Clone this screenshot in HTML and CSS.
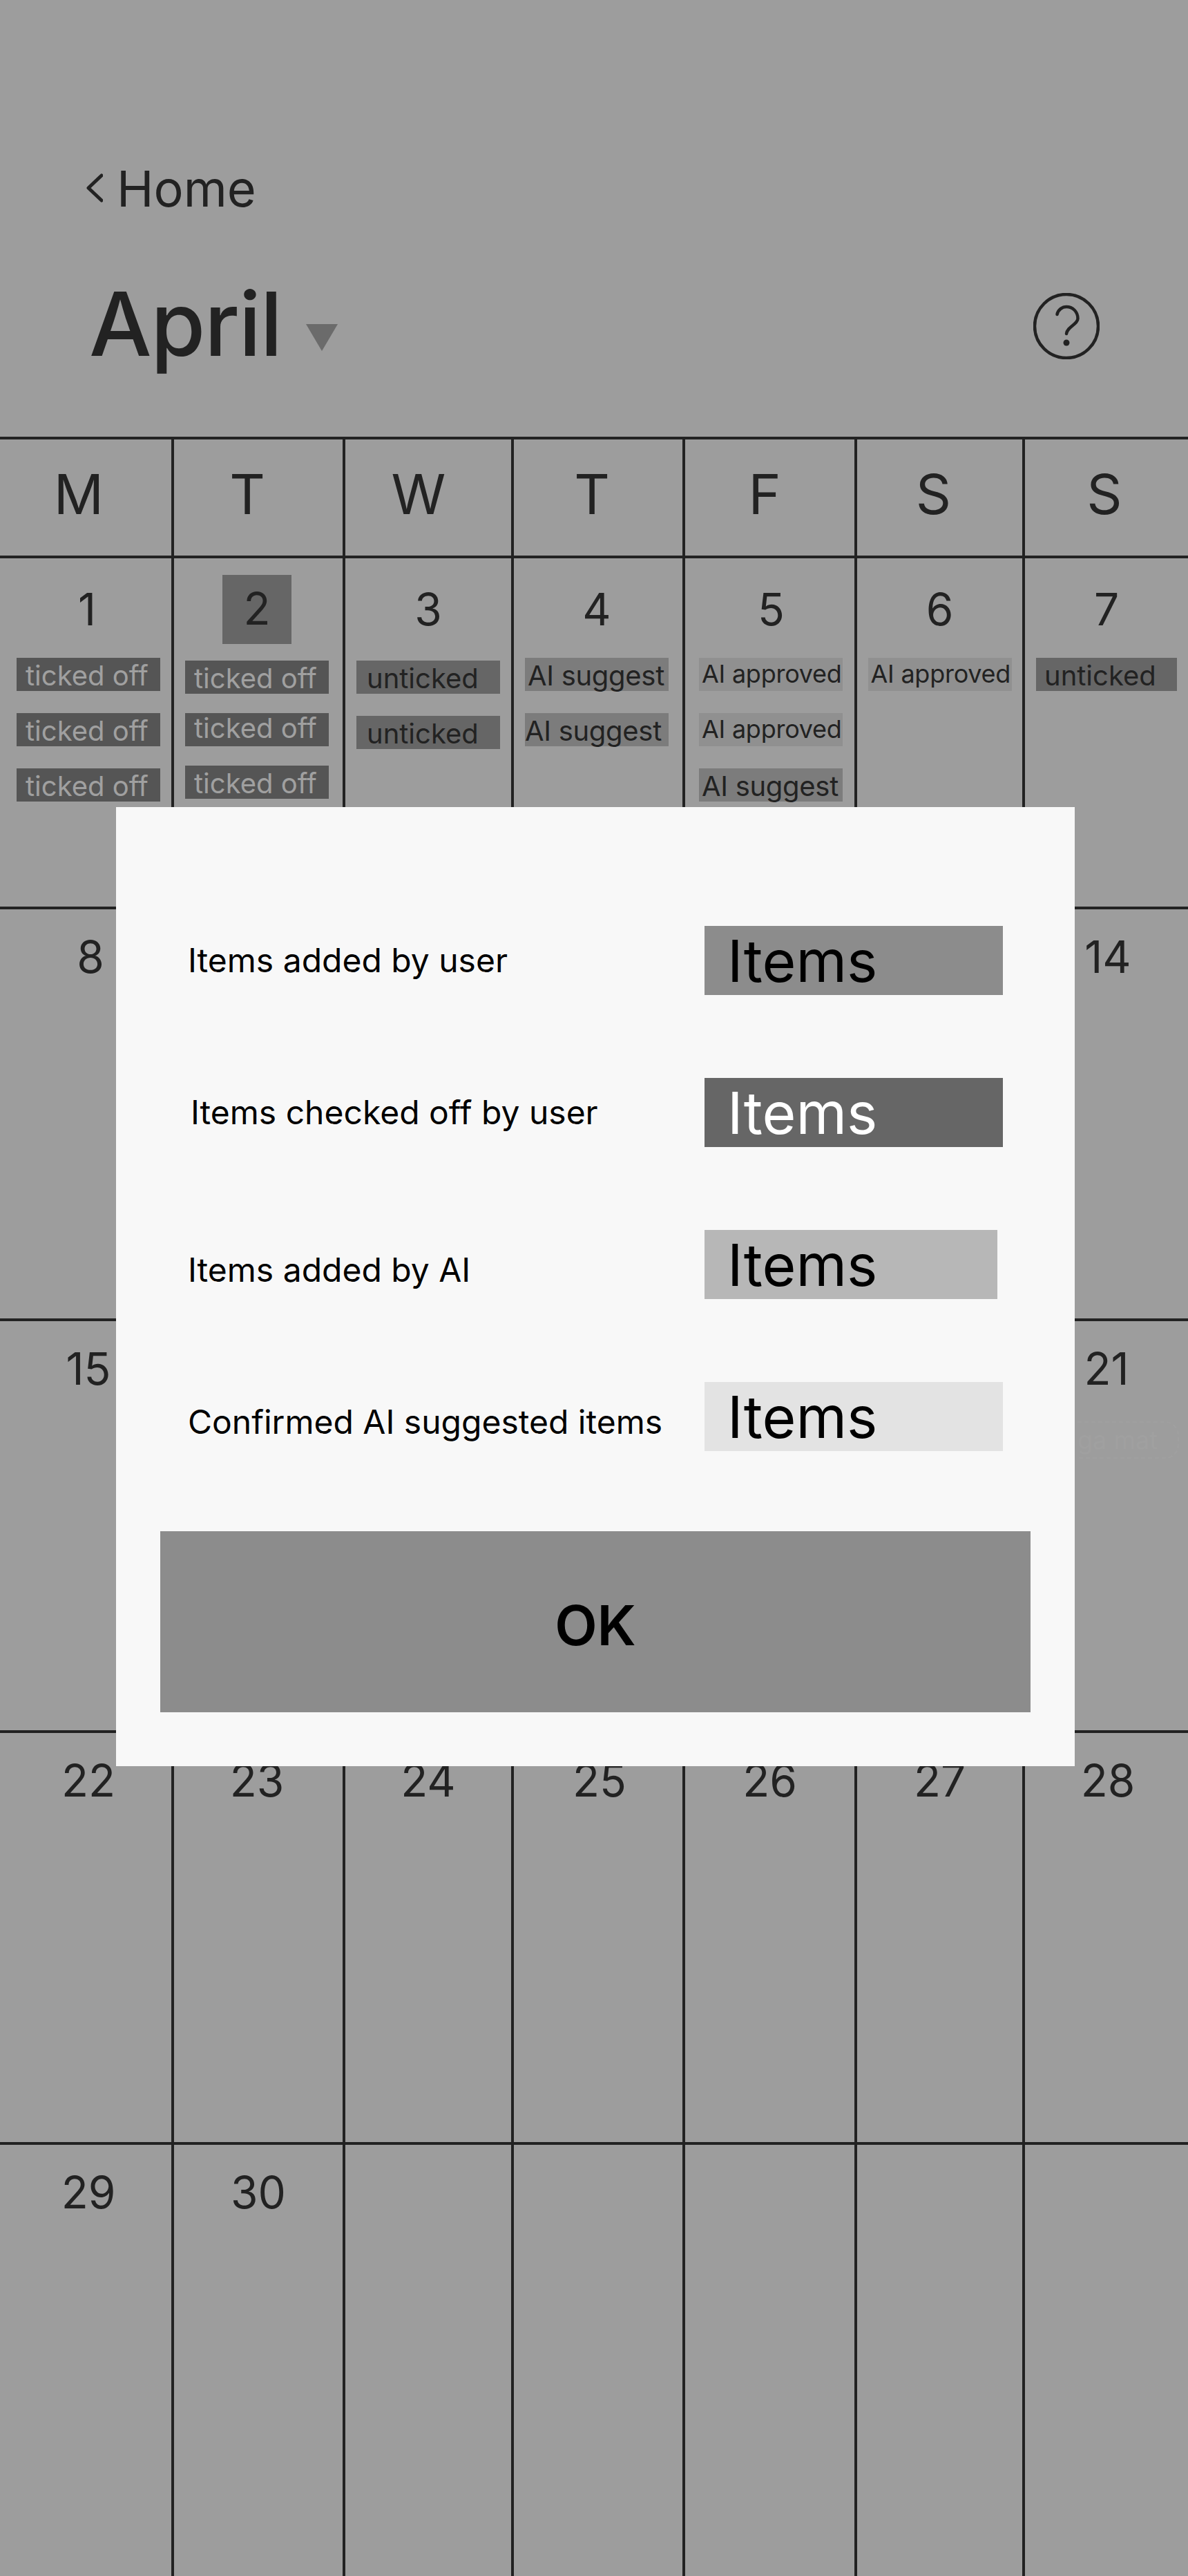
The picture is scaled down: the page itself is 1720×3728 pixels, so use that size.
FILE: index.html
```html
<!DOCTYPE html>
<html lang="en">
<head>
<meta charset="utf-8">
<title>April</title>
<link rel="stylesheet" href="styles.css">
</head>
<body>
<div class="page">
  <header class="header">
    <a class="back">
      <svg class="chevron" viewBox="0 0 24 42"><path d="M22 3 L3 21 L22 39"/></svg>
      <span>Home</span>
    </a>
    <div class="title-row">
      <h1 class="month">April</h1>
      <svg class="caret" viewBox="0 0 46 39"><path d="M0 0H46L23 39Z"/></svg>
      <svg class="help" viewBox="0 0 96 96">
        <ellipse cx="48" cy="48" rx="46" ry="46"/>
        <path d="M34.5 31C36 24 42 20 48 20C57 20 64.5 27 64.5 37C64.5 45 49 49 48 59"/>
        <circle class="help-dot" cx="48" cy="72" r="4.5"/>
      </svg>
    </div>
  </header>

  <section class="calendar">
    <div class="weekday">M</div><div class="weekday">T</div><div class="weekday">W</div><div class="weekday">T</div><div class="weekday">F</div><div class="weekday">S</div><div class="weekday">S</div>

    <div class="cell first-week"><div class="date date-right">1</div>
      <div class="tags tags-first"><div class="tag done">ticked off</div><div class="tag done">ticked off</div><div class="tag done">ticked off</div></div></div>
    <div class="cell first-week"><div class="date today"><span>2</span></div>
      <div class="tags tags-low tags-tight"><div class="tag done">ticked off</div><div class="tag done raised">ticked off</div><div class="tag done">ticked off</div></div></div>
    <div class="cell first-week"><div class="date">3</div>
      <div class="tags tags-low"><div class="tag todo">unticked</div><div class="tag todo">unticked</div></div></div>
    <div class="cell first-week"><div class="date date-left">4</div>
      <div class="tags tags-left"><div class="tag suggest">AI suggest</div><div class="tag suggest flush">AI suggest</div></div></div>
    <div class="cell first-week"><div class="date date-right">5</div>
      <div class="tags tags-right"><div class="tag approved">AI approved</div><div class="tag approved">AI approved</div><div class="tag suggest">AI suggest</div></div></div>
    <div class="cell first-week"><div class="date">6</div>
      <div class="tags"><div class="tag approved">AI approved</div></div></div>
    <div class="cell first-week"><div class="date">7</div>
      <div class="tags"><div class="tag todo last">unticked</div></div></div>

    <div class="cell"><div class="date date-eight">8</div></div><div class="cell"></div><div class="cell"></div><div class="cell"></div><div class="cell"></div><div class="cell"></div><div class="cell"><div class="date">14</div></div>
    <div class="cell"><div class="date">15</div></div><div class="cell"></div><div class="cell"></div><div class="cell"></div><div class="cell"></div><div class="cell"></div><div class="cell"><div class="date date-left">21</div><div class="ghost">ga mat</div></div>
    <div class="cell"><div class="date">22</div></div><div class="cell"><div class="date date-left">23</div></div><div class="cell"><div class="date">24</div></div><div class="cell"><div class="date date-right">25</div></div><div class="cell"><div class="date">26</div></div><div class="cell"><div class="date">27</div></div><div class="cell"><div class="date">28</div></div>
    <div class="cell"><div class="date">29</div></div><div class="cell"><div class="date">30</div></div><div class="cell"></div><div class="cell"></div><div class="cell"></div><div class="cell"></div><div class="cell"></div>
  </section>

  <div class="modal">
    <div class="legend-row">
      <div class="legend-label">Items added by user</div>
      <div class="swatch swatch-user">Items</div>
    </div>
    <div class="legend-row">
      <div class="legend-label label-inset">Items checked off by user</div>
      <div class="swatch swatch-checked">Items</div>
    </div>
    <div class="legend-row">
      <div class="legend-label label-low">Items added by AI</div>
      <div class="swatch swatch-ai swatch-narrow">Items</div>
    </div>
    <div class="legend-row">
      <div class="legend-label label-low">Confirmed AI suggested items</div>
      <div class="swatch swatch-confirmed">Items</div>
    </div>
    <button class="ok">OK</button>
  </div>
</div>
</body>
</html>
```

FILE: styles.css
```css
* { box-sizing: border-box; }
html, body { margin: 0; padding: 0; }
body {
  width: 1720px;
  height: 3728px;
  overflow: hidden;
  background: #9d9d9d;
  color: #222;
  font-family: "Inter", "Liberation Sans", sans-serif;
}
.page { position: relative; width: 1720px; height: 3728px; }

/* header */
.header { height: 632px; padding-top: 229px; }
.back {
  display: flex;
  align-items: center;
  height: 88px;
  padding-left: 125px;
  gap: 20px;
  font-size: 72px;
  line-height: 88px;
}
.chevron { width: 24px; height: 42px; margin-top: -2px; }
.chevron path { fill: none; stroke: #222; stroke-width: 5; stroke-linecap: round; stroke-linejoin: round; }
.title-row {
  display: flex;
  align-items: flex-start;
  margin-top: 74px;
  padding: 0 128px 0 129px;
}
.month { margin: 0; font-size: 128px; line-height: 156px; font-weight: 500; letter-spacing: -1.4px; }
.caret { width: 46px; height: 39px; margin: 78px 0 0 35px; fill: #6b6b6b; }
.help { width: 96px; height: 96px; margin: 33px 0 0 auto; }
.help ellipse, .help path { fill: none; stroke: #222; stroke-width: 4.5; stroke-linecap: round; }
.help-dot { fill: #222; }

/* calendar */
.calendar {
  display: grid;
  grid-template-columns: 252px 248px 244px 248px 249px 243px 236px;
  grid-template-rows: 172px 508px 596px 596px 596px 624px;
  border-top: 4px solid #222;
}
.weekday {
  display: flex;
  align-items: center;
  justify-content: center;
  padding-bottom: 10px;
  font-size: 80px;
  line-height: 1;
  border-right: 4px solid #222;
  border-bottom: 4px solid #222;
}
.weekday:nth-child(1) { padding-right: 20px; }
.weekday:nth-child(2) { padding-right: 32px; }
.weekday:nth-child(3) { padding-right: 28px; }
.weekday:nth-child(4) { padding-right: 18px; }
.weekday:nth-child(5) { padding-right: 15px; }
.weekday:nth-child(6) { padding-right: 18px; }
.weekday:nth-child(7) { padding-right: 6px; border-right: 0; }

.cell {
  border-right: 4px solid #222;
  border-bottom: 4px solid #222;
  padding-top: 37px;
  min-width: 0;
}
.cell:nth-child(7n) { border-right: 0; padding-left: 4px; }
.cell:nth-child(7n+1) { padding-left: 8px; }
.cell:nth-last-child(-n+7) { border-bottom: 0; }

.date { font-size: 64px; line-height: 64px; text-align: center; }
.date-left { padding-right: 4px; }
.date-right { padding-left: 4px; }
.date-eight { padding-left: 6px; }
.first-week { padding: 24px 0 0; }
.cell.first-week { padding-left: 0; }
.first-week .date {
  display: flex;
  align-items: center;
  justify-content: center;
  height: 100px;
  line-height: 98px;
}
.today span { display: block; width: 100px; height: 100px; background: #666; line-height: 98px; }
.first-week .today { margin-right: 4px; }

/* chips in the first week */
.tags { display: flex; flex-direction: column; gap: 32px; margin-top: 20px; align-items: center; }
.tags-first { padding-left: 8px; }
.tags-low { margin-top: 24px; }
.tags-tight { gap: 28px; margin-right: 4px; }
.tags-left { padding-right: 4px; }
.tags-right { padding-left: 3px; }
.tag {
  flex: none;
  width: 208px;
  height: 48px;
  font-size: 40px;
  line-height: 51px;
  white-space: nowrap;
  padding-left: 10px;
}
.done { background: #555; color: #a0a0a0; padding-left: 13px; }
.raised { line-height: 43px; }
.todo { background: #666; padding-left: 15px; }
.last { width: 204px; padding-left: 12px; }
.suggest { background: #7c7c7c; padding-left: 4px; letter-spacing: -0.3px; }
.flush { padding-left: 0; }
.approved { background: #909090; font-size: 36px; line-height: 46px; padding-left: 4px; letter-spacing: -0.25px; }

.ghost {
  width: 147px;
  height: 54px;
  margin: 44px 0 0 72px;
  border: 2px dashed #a0a0a0;
  border-left: 0;
  border-radius: 0 20px 20px 0;
  color: #a0a0a0;
  font-size: 36px;
  line-height: 50px;
  white-space: nowrap;
}

/* modal */
.modal {
  position: absolute;
  left: 168px;
  top: 1168px;
  width: 1388px;
  height: 1388px;
  padding: 172px 64px 0;
  background: #f8f8f8;
  color: #000;
}
.legend-row { display: flex; height: 100px; margin-bottom: 120px; padding-left: 40px; }
.legend-label { width: 748px; font-size: 48px; line-height: 100px; white-space: nowrap; }
.label-inset { padding-left: 4px; }
.label-low { padding-top: 8px; }
.swatch {
  width: 432px;
  height: 100px;
  padding-left: 33px;
  font-size: 84px;
  line-height: 102px;
}
.swatch-narrow { width: 424px; }
.swatch-user { background: #8c8c8c; }
.swatch-checked { background: #666; color: #fff; }
.swatch-ai { background: #b7b7b7; }
.swatch-confirmed { background: #e3e3e3; }
.ok {
  display: block;
  width: 1260px;
  height: 262px;
  margin: -4px 0 0;
  padding: 8px 0 0;
  border: 0;
  background: #8c8c8c;
  color: #000;
  font-family: inherit;
  font-size: 80px;
  font-weight: 600;
}
```
